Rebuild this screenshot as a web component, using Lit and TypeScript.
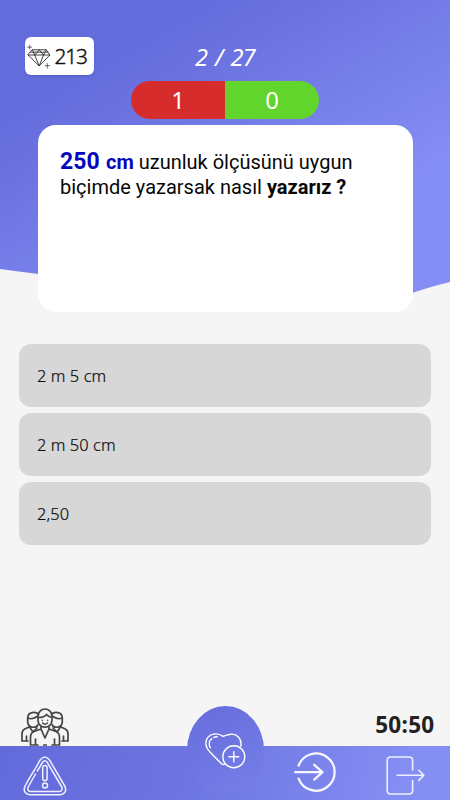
import { LitElement, html, css, svg } from "lit";
import { customElement, property } from "lit/decorators.js";

@customElement("answer-option")
class AnswerOption extends LitElement {
  @property() label = "";

  static styles = css`
    :host {
      display: flex;
      align-items: center;
      height: 62.7px;
      box-sizing: border-box;
      padding: 0.3px 18px 0;
      border-radius: 12px;
      background: #d7d7d7;
      color: #0c0c0c;
      font: 300 16.4px "Noto Sans", "Open Sans", sans-serif;
      letter-spacing: 0.08px;
      -webkit-text-stroke: 0.2px #0c0c0c;
    }
  `;

  render() {
    return html`<span>${this.label}</span>`;
  }
}

const diamond = svg`
  <svg width="25" height="25" viewBox="0 0 25 25" fill="none" stroke="#222" stroke-width=".85" stroke-linejoin="round" stroke-linecap="round">
    <path d="M5.5 5.8H19.2L22.8 11 12.2 22 1.2 11Z M1.2 11H22.8 M5.5 5.8L7.7 11 12.2 5.8 16.5 11 19.2 5.8 M7.7 11L12.2 22 16.5 11 M3.6 8.2H21"/>
    <path d="M2.7 1.2V5.2M.7 3.2H4.7M20.3 19.5V24M18 21.7H22.6" stroke-width=".65"/>
  </svg>`;

const people = svg`
  <svg width="48" height="38" viewBox="0 0 48 38" fill="none" stroke="#444" stroke-width="1.7" stroke-linejoin="round" stroke-linecap="round">
    <path d="M17 16.5C16 20 8 21 6.7 14.5V10C6.7 3.5 15 3.2 17.6 6.5M31 16.5C32 20 40 21 41.3 14.5V10C41.3 3.5 33 3.2 30.4 6.5"/>
    <path d="M6.7 10C10 11.5 13 10.7 16 8.5M41.3 10C38 11.5 35 10.7 32 8.5"/>
    <path d="M8.5 18.8L3.8 21Q1 22.3 1 26V33H7M5.5 28V33M8.5 19L12 24 16 20M39.5 18.8L44.2 21Q47 22.3 47 26V33H41M42.5 28V33M39.5 19L36 24 32 20"/>
    <path d="M17 11V8A7 7 0 0 1 31 8V12C31 21.5 17 21.5 17 12ZM17 9.5Q23 9.7 25.5 6.5 27.5 9.2 31 9.5"/>
    <path d="M20 18.7V21L13 23.5Q9.5 25 9.5 29V37H17M28 18.7V21L35 23.5Q38.5 25 38.5 29V37H31M20 21L24 30 28 21M14.5 31V37M33.5 31V37M22.7 37H25.3"/>
    <path d="M21.3 12.3V12.5M26.7 12.3V12.5M21.5 15Q24 17.3 26.5 15" stroke-width="1.4"/>
  </svg>`;

const warning = svg`
  <svg width="44" height="40" viewBox="0 0 44 40" fill="none" stroke="#eef0ff" stroke-width="1.5" stroke-linecap="round" stroke-linejoin="round">
    <path d="M17 4.2Q21.8-2.3 26.7 4.2L42 30.5Q44.5 37.8 37 38.7H7Q-.5 37.8 1.8 30.5Q8 19 11.5 14L17 4.2Z"/>
    <path d="M12.5 18L5.2 31Q3.8 35 7.5 35.5H36.2Q40 35 38.8 31L24 6Q21.8 3.5 19.7 6L14.3 15"/>
    <rect x="19.7" y="9.5" width="4.4" height="15.2" rx="2.2"/>
    <circle cx="22" cy="29.5" r="2.5"/>
  </svg>`;

const heart = svg`
  <svg width="42" height="38" viewBox="0 0 42 38" fill="none" stroke="#fff" stroke-width="1.4" stroke-linecap="round" stroke-linejoin="round">
    <path d="M35.8 14.2C37.2 6.5 31.5 1.3 25.5 2.2Q21.5 2.8 18.2 4.4C12 .3 4.5 1.3 1.6 7.5C-.4 13 2.2 17.2 5.2 20.3L16.5 31.8Q18 33.2 20 31.8"/>
    <path d="M5.3 15.8C3.6 12.2 3.8 8.8 6.8 6.6M8.8 5.4Q10.5 4.7 12.2 4.8"/>
    <circle cx="28.8" cy="24.8" r="11"/>
    <path d="M23.8 24.8H33.8M28.8 19.8V29.8"/>
  </svg>`;

const enter = svg`
  <svg width="42" height="40" viewBox="0 0 42 40" fill="none" stroke="#f6f7ff" stroke-width="2.3" stroke-linecap="round" stroke-linejoin="round">
    <path d="M4.6 13.6A18.6 18.6 0 1 1 4.6 26.6" />
    <path d="M1.3 20.2H28M20.2 12.8L28.5 20.2 20.2 27.6"/>
  </svg>`;

const exit = svg`
  <svg width="40" height="39" viewBox="0 0 40 39" fill="none" stroke="#eef0ff" stroke-width="1.6" stroke-linecap="round" stroke-linejoin="round">
    <path d="M26.6 14V4.5Q26.6 1 23 1H4.7Q1.2 1 1.2 4.5V34.5Q1.2 38 4.7 38H23Q26.6 38 26.6 34.5V24.5"/>
    <path d="M11 19.3H37.5M32.8 14.2L37.8 19.3 32.8 24.4"/>
  </svg>`;

@customElement("app-root")
class AppRoot extends LitElement {
  static styles = css`
    :host {
      display: flex;
      flex-direction: column;
      position: relative;
      width: 450px;
      height: 800px;
      box-sizing: border-box;
      overflow: hidden;
      background: #f5f5f5;
      font-family: "Noto Sans", "Open Sans", sans-serif;
    }
    svg { display: block; flex: none; }
    .backdrop { position: absolute; inset: 0 0 auto; z-index: 0; }
    header, main, footer { position: relative; z-index: 1; }
    header {
      display: grid;
      grid-template-columns: 1fr auto 1fr;
      height: 44px;
      padding: 37px 25px 0;
    }
    .gems {
      display: flex;
      align-items: center;
      justify-self: start;
      width: 68.5px;
      height: 38px;
      box-sizing: border-box;
      padding-left: 2px;
      gap: 2.5px;
      border-radius: 6px;
      background: #fff;
      color: #111;
      font-size: 20.8px;
      font-weight: 300;
      letter-spacing: -1.1px;
      -webkit-text-stroke: 0.4px #111;
      box-shadow: 0 1px 2px #3d449060;
    }
    .progress {
      color: #fff;
      font-size: 23.5px;
      font-style: italic;
      line-height: 40px;
      word-spacing: 2.5px;
      letter-spacing: -0.7px;
    }
    .score {
      display: grid;
      grid-template-columns: 1fr 1fr;
      width: 188px;
      height: 38px;
      margin: 0 auto;
      border-radius: 19px;
      overflow: hidden;
      color: #fff;
      font-size: 24px;
      line-height: 38px;
      text-align: center;
    }
    .wrong { background: #d72c2c; }
    .right { background: #61d52c; }
    .question {
      height: 187px;
      box-sizing: border-box;
      margin: 6px 37.5px 0;
      padding: 25px 22.5px;
      border-radius: 18px;
      background: #fff;
      color: #080808;
      font: 20px/25px Roboto, sans-serif;
      white-space: nowrap;
    }
    .line { height: 25px; }
    .amount { color: #0505be; font-weight: 700; word-spacing: 1.4px; }
    .big { font-size: 23px; line-height: 20px; }
    .options {
      display: flex;
      flex-direction: column;
      gap: 6.5px;
      margin: 32px 19px 0;
    }
    footer { margin-top: auto; }
    .status {
      display: flex;
      justify-content: space-between;
      align-items: flex-end;
      height: 38.5px;
      padding: 0 15.5px 0 21px;
    }
    .half {
      color: #222;
      font-size: 22.5px;
      font-weight: 700;
      line-height: 30px;
      padding-bottom: 6px;
      letter-spacing: 0.3px;
    }
    .bar {
      display: flex;
      height: 54.5px;
      box-sizing: border-box;
      padding-left: 23px;
      background: linear-gradient(105deg, #636ada, #6e76e2 45%, #858ef3 90%);
    }
    .warn { margin-top: 10px; }
    .enter { margin: 6px 0 0 227px; }
    .exit { margin: 10px 0 0 50px; }
    .add {
      position: absolute;
      left: 187px;
      bottom: 6px;
      display: flex;
      width: 77px;
      height: 88px;
      box-sizing: border-box;
      padding: 25.5px 0 0 18px;
      border-radius: 38.5px / 44px;
      background: linear-gradient(150deg, #676edc, #767ee8);
    }
  `;

  render() {
    return html`
      <svg class="backdrop" width="450" height="310" viewBox="0 0 450 310">
        <defs>
          <linearGradient id="sky" gradientUnits="userSpaceOnUse" x1="50" y1="87" x2="182" y2="315">
            <stop offset="0" stop-color="#646bdb" />
            <stop offset="1" stop-color="#858ef4" />
          </linearGradient>
        </defs>
        <path fill="url(#sky)" d="M0 0H450V282Q433 286 412 293Q330 318 225 298Q130 282 38 274L0 269Z" />
      </svg>
      <header>
        <div class="gems">${diamond}<span>213</span></div>
        <div class="progress">2 / 27</div>
      </header>
      <main>
        <div class="score"><div class="wrong">1</div><div class="right">0</div></div>
        <div class="question">
          <div class="line"><span class="amount"><span class="big">250</span> cm</span> uzunluk ölçüsünü uygun</div>
          <div class="line">biçimde yazarsak nasıl <b>yazarız ?</b></div>
        </div>
        <div class="options">
          <answer-option label="2 m 5 cm"></answer-option>
          <answer-option label="2 m 50 cm"></answer-option>
          <answer-option label="2,50"></answer-option>
        </div>
      </main>
      <footer>
        <div class="status">${people}<div class="half">50:50</div></div>
        <div class="bar">
          <div class="warn">${warning}</div>
          <div class="enter">${enter}</div>
          <div class="exit">${exit}</div>
        </div>
        <div class="add">${heart}</div>
      </footer>
    `;
  }
}
